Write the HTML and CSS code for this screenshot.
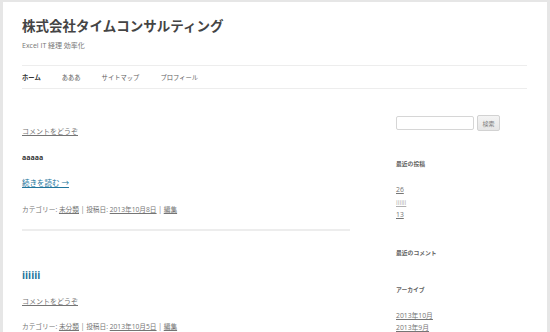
FILE: index.html
```html
<!DOCTYPE html>
<html lang="ja">
<head>
<meta charset="utf-8">
<title>株式会社タイムコンサルティング</title>
<link rel="stylesheet" href="styles.css">
</head>
<body>
<div class="page">
  <header class="masthead">
    <h1 class="site-title">株式会社タイムコンサルティング</h1>
    <p class="site-desc">Excel IT 経理 効率化</p>
    <nav class="nav">
      <a class="nav-item current" href="#">ホーム</a>
      <a class="nav-item" href="#">あああ</a>
      <a class="nav-item" href="#">サイトマップ</a>
      <a class="nav-item" href="#">プロフィール</a>
    </nav>
  </header>
  <div class="body">
    <main class="content">
      <article class="post first">
        <p class="line"><a class="meta-link" href="#">コメントをどうぞ</a></p>
        <p class="line strong">aaaaa</p>
        <p class="line"><a class="more" href="#">続きを読む →</a></p>
        <p class="line meta">カテゴリー: <a class="meta-link" href="#">未分類</a> | 投稿日: <a class="meta-link" href="#">2013年10月8日</a> | <a class="meta-link" href="#">編集</a></p>
      </article>
      <article class="post second">
        <h2 class="post-title"><a href="#">iiiiii</a></h2>
        <p class="line"><a class="meta-link" href="#">コメントをどうぞ</a></p>
        <p class="line meta">カテゴリー: <a class="meta-link" href="#">未分類</a> | 投稿日: <a class="meta-link" href="#">2013年10月5日</a> | <a class="meta-link" href="#">編集</a></p>
      </article>
    </main>
    <aside class="sidebar">
      <form class="search">
        <input class="search-input" type="text">
        <button class="search-btn" type="button">検索</button>
      </form>
      <section class="widget recent">
        <h3 class="widget-title">最近の投稿</h3>
        <ul class="widget-list">
          <li><a class="meta-link" href="#">26</a></li>
          <li><a class="meta-link faint" href="#">iiiiii</a></li>
          <li><a class="meta-link" href="#">13</a></li>
        </ul>
      </section>
      <section class="widget comments">
        <h3 class="widget-title">最近のコメント</h3>
      </section>
      <section class="widget archive">
        <h3 class="widget-title">アーカイブ</h3>
        <ul class="widget-list">
          <li><a class="meta-link" href="#">2013年10月</a></li>
          <li><a class="meta-link" href="#">2013年9月</a></li>
        </ul>
      </section>
    </aside>
  </div>
</div>
</body>
</html>
```
FILE: styles.css
```css
html, body {
  margin: 0;
  padding: 0;
}
body {
  background: #e6e6e6;
  font-family: "Open Sans", "Noto Sans CJK JP", sans-serif;
  color: #444;
  height: 332px;
  overflow: hidden;
}
.page {
  margin: 2px 3px 0 3px;
  background: #fff;
  padding: 0 20px 0 19px;
  height: 330px;
  box-sizing: border-box;
}
.masthead {
  padding-top: 15px;
}
.site-title {
  margin: 0;
  font-size: 13.5px;
  line-height: 18px;
  font-weight: bold;
  color: #444;
}
.site-desc {
  margin: 5px 0 0;
  font-size: 7px;
  line-height: 12px;
  color: #757575;
}
.nav {
  margin-top: 13px;
  border-top: 1px solid #ededed;
  border-bottom: 1px solid #ededed;
  height: 22px;
  display: flex;
  align-items: center;
  gap: 21px;
}
.nav-item {
  font-size: 6.3px;
  color: #5e5e5e;
  text-decoration: none;
}
.nav-item.current {
  color: #333;
  font-weight: bold;
}
.body {
  display: flex;
  justify-content: space-between;
}
.content {
  width: 328px;
}
.line {
  margin: 0;
  font-size: 7px;
  line-height: 12px;
  color: #444;
}
.line.meta {
  font-size: 6.7px;
}
.post.first {
  padding-top: 37px;
  border-bottom: 2px solid #ededed;
  padding-bottom: 13.5px;
}
.post.first .line + .line {
  margin-top: 13.5px;
}
.strong {
  font-weight: bold;
  color: #333;
}
.meta-link {
  color: #757575;
  text-decoration: underline;
}
.meta {
  color: #757575;
}
.more {
  color: #21759b;
  text-decoration: underline;
  font-size: 7.5px;
}
.post.second {
  padding-top: 36.5px;
}
.post-title {
  margin: 0;
  font-size: 10px;
  line-height: 14px;
}
.post-title a {
  color: #21759b;
  text-decoration: none;
}
.post.second .post-title + .line {
  margin-top: 14px;
}
.post.second .line + .line {
  margin-top: 13px;
}
.sidebar {
  width: 131px;
  padding-top: 26px;
}
.search {
  display: flex;
  align-items: center;
  gap: 3px;
  margin: 0;
}
.search-input {
  width: 78px;
  height: 14px;
  box-sizing: border-box;
  border: 1px solid #d6d6d6;
  border-radius: 2px;
  padding: 0;
  margin: 0;
}
.search-btn {
  width: 23px;
  height: 16px;
  box-sizing: border-box;
  border: 1px solid #d2d2d2;
  border-radius: 2px;
  background: linear-gradient(#f4f4f4, #e6e6e6);
  font-family: "Open Sans", "Noto Sans CJK JP", sans-serif;
  font-size: 6px;
  color: #7c7c7c;
  padding: 0;
  margin: 0;
}
.widget-title {
  margin: 0;
  font-size: 5.8px;
  line-height: 10px;
  font-weight: bold;
  color: #636363;
}
.widget.recent {
  margin-top: 28px;
}
.widget.comments {
  margin-top: 26px;
}
.widget.archive {
  margin-top: 27px;
}
.widget-list {
  list-style: none;
  margin: 15px 0 0;
  padding: 0;
}
.widget-list li {
  font-size: 6.8px;
  line-height: 12.5px;
}
.faint {
  color: #b0b0b0;
}
```
